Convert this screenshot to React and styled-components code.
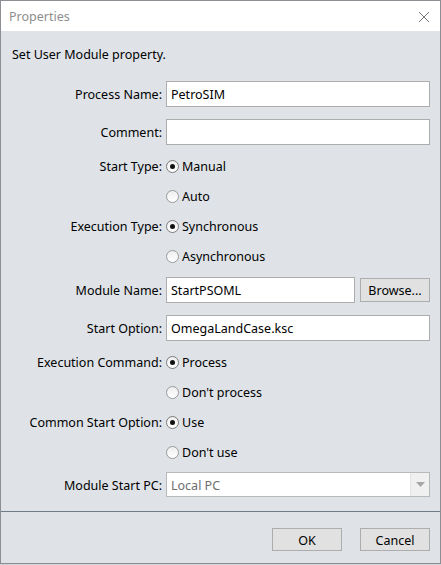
import styled, { createGlobalStyle } from 'styled-components'

const GlobalStyle = createGlobalStyle`
  html, body {
    margin: 0;
    padding: 0;
    background: #cfd4d9;
  }
  body {
    font-family: 'Noto Sans', 'Open Sans', sans-serif;
    font-size: 12.5px;
    color: #000;
  }
`

const Window = styled.div`
  width: 441px;
  height: 564px;
  box-sizing: border-box;
  border: 1px solid #8b8f94;
  background: #dfe3e7;
  display: flex;
  flex-direction: column;
`

const TitleBar = styled.div`
  height: 30px;
  background: #fff;
  display: flex;
  align-items: center;
  justify-content: space-between;
  padding: 1px 10px 0 8px;
  box-sizing: border-box;
`

const Title = styled.span`
  color: #8e8e8e;
`

const Body = styled.div`
  flex: 1;
  display: flex;
  flex-direction: column;
  padding: 13px 10px 0 0;
`

const Intro = styled.div`
  line-height: 16px;
  padding: 3px 0 0 11px;
  margin-bottom: 12px;
`

const Form = styled.div`
  display: flex;
  flex-direction: column;
`

const Row = styled.div`
  display: grid;
  grid-template-columns: 161px 1fr;
  column-gap: 4px;
  align-items: center;
  height: ${(p) => p.h || 30}px;
`

const Label = styled.span`
  text-align: right;
  white-space: nowrap;
  padding-top: 1px;
`

const Controls = styled.div`
  display: flex;
  align-items: center;
  gap: 5px;
`

const TextBox = styled.div`
  flex: 1;
  height: 26px;
  box-sizing: border-box;
  border: 1px solid #adadad;
  background: #fff;
  display: flex;
  align-items: center;
  padding: 1px 0 0 4px;
`

const Button = styled.div`
  width: ${(p) => p.w || 70}px;
  height: ${(p) => p.h || 23}px;
  box-sizing: border-box;
  border: 1px solid #adadad;
  background: #e1e1e1;
  display: flex;
  align-items: center;
  justify-content: center;
  padding-top: 1px;
`

const RadioWrap = styled.div`
  display: flex;
  align-items: center;
  gap: 3px;
`

const Circle = styled.span`
  width: 13px;
  height: 13px;
  box-sizing: border-box;
  border-radius: 50%;
  border: 1px solid ${(p) => (p.on ? '#7a7a7a' : '#9a9a9a')};
  background: linear-gradient(#eeeeee, #ffffff);
  display: flex;
  align-items: center;
  justify-content: center;
  &::after {
    content: '';
    width: 5px;
    height: 5px;
    border-radius: 50%;
    background: #111;
    display: ${(p) => (p.on ? 'block' : 'none')};
  }
`

const RadioText = styled.span`
  padding-top: 1px;
`

const Select = styled.div`
  flex: 1;
  height: 25px;
  box-sizing: border-box;
  border: 1px solid #b9b9b9;
  display: flex;
`

const SelectText = styled.div`
  flex: 1;
  background: #fff;
  color: #6d6d6d;
  display: flex;
  align-items: center;
  padding: 1px 0 0 4px;
`

const SelectArrow = styled.div`
  width: 18px;
  background: #f0f0f0;
  border-left: 1px solid #e4e4e4;
  display: flex;
  align-items: center;
  justify-content: center;
`

const Footer = styled.div`
  height: 52px;
  box-sizing: border-box;
  border-top: 1px solid #6f7c88;
  display: flex;
  justify-content: flex-end;
  align-items: flex-start;
  gap: 18px;
  padding: 16px 10px 0 0;
`

const Radio = ({ on, children }) => (
  <RadioWrap>
    <Circle on={on} />
    <RadioText>{children}</RadioText>
  </RadioWrap>
)

const Close = () => (
  <svg width="12" height="12" viewBox="0 0 12 12">
    <path d="M1 1 L11 11 M11 1 L1 11" stroke="#777" strokeWidth="1" />
  </svg>
)

const App = () => (
  <>
    <GlobalStyle />
    <Window>
      <TitleBar>
        <Title>Properties</Title>
        <Close />
      </TitleBar>
      <Body>
        <Intro>Set User Module property.</Intro>
        <Form>
          <Row h={38}>
            <Label>Process Name:</Label>
            <Controls>
              <TextBox>PetroSIM</TextBox>
            </Controls>
          </Row>
          <Row h={38}>
            <Label>Comment:</Label>
            <Controls>
              <TextBox />
            </Controls>
          </Row>
          <Row>
            <Label>Start Type:</Label>
            <Radio on>Manual</Radio>
          </Row>
          <Row>
            <Label />
            <Radio>Auto</Radio>
          </Row>
          <Row>
            <Label>Execution Type:</Label>
            <Radio on>Synchronous</Radio>
          </Row>
          <Row>
            <Label />
            <Radio>Asynchronous</Radio>
          </Row>
          <Row h={38}>
            <Label>Module Name:</Label>
            <Controls>
              <TextBox>StartPSOML</TextBox>
              <Button w={70} h={24}>Browse...</Button>
            </Controls>
          </Row>
          <Row h={38}>
            <Label>Start Option:</Label>
            <Controls>
              <TextBox>OmegaLandCase.ksc</TextBox>
            </Controls>
          </Row>
          <Row>
            <Label>Execution Command:</Label>
            <Radio on>Process</Radio>
          </Row>
          <Row>
            <Label />
            <Radio>Don't process</Radio>
          </Row>
          <Row>
            <Label>Common Start Option:</Label>
            <Radio on>Use</Radio>
          </Row>
          <Row>
            <Label />
            <Radio>Don't use</Radio>
          </Row>
          <Row h={35}>
            <Label>Module Start PC:</Label>
            <Controls>
              <Select>
                <SelectText>Local PC</SelectText>
                <SelectArrow>
                  <svg width="9" height="5" viewBox="0 0 9 5">
                    <path d="M0 0 L9 0 L4.5 5 Z" fill="#a6a6a6" />
                  </svg>
                </SelectArrow>
              </Select>
            </Controls>
          </Row>
        </Form>
      </Body>
      <Footer>
        <Button>OK</Button>
        <Button>Cancel</Button>
      </Footer>
    </Window>
  </>
)

export default App
